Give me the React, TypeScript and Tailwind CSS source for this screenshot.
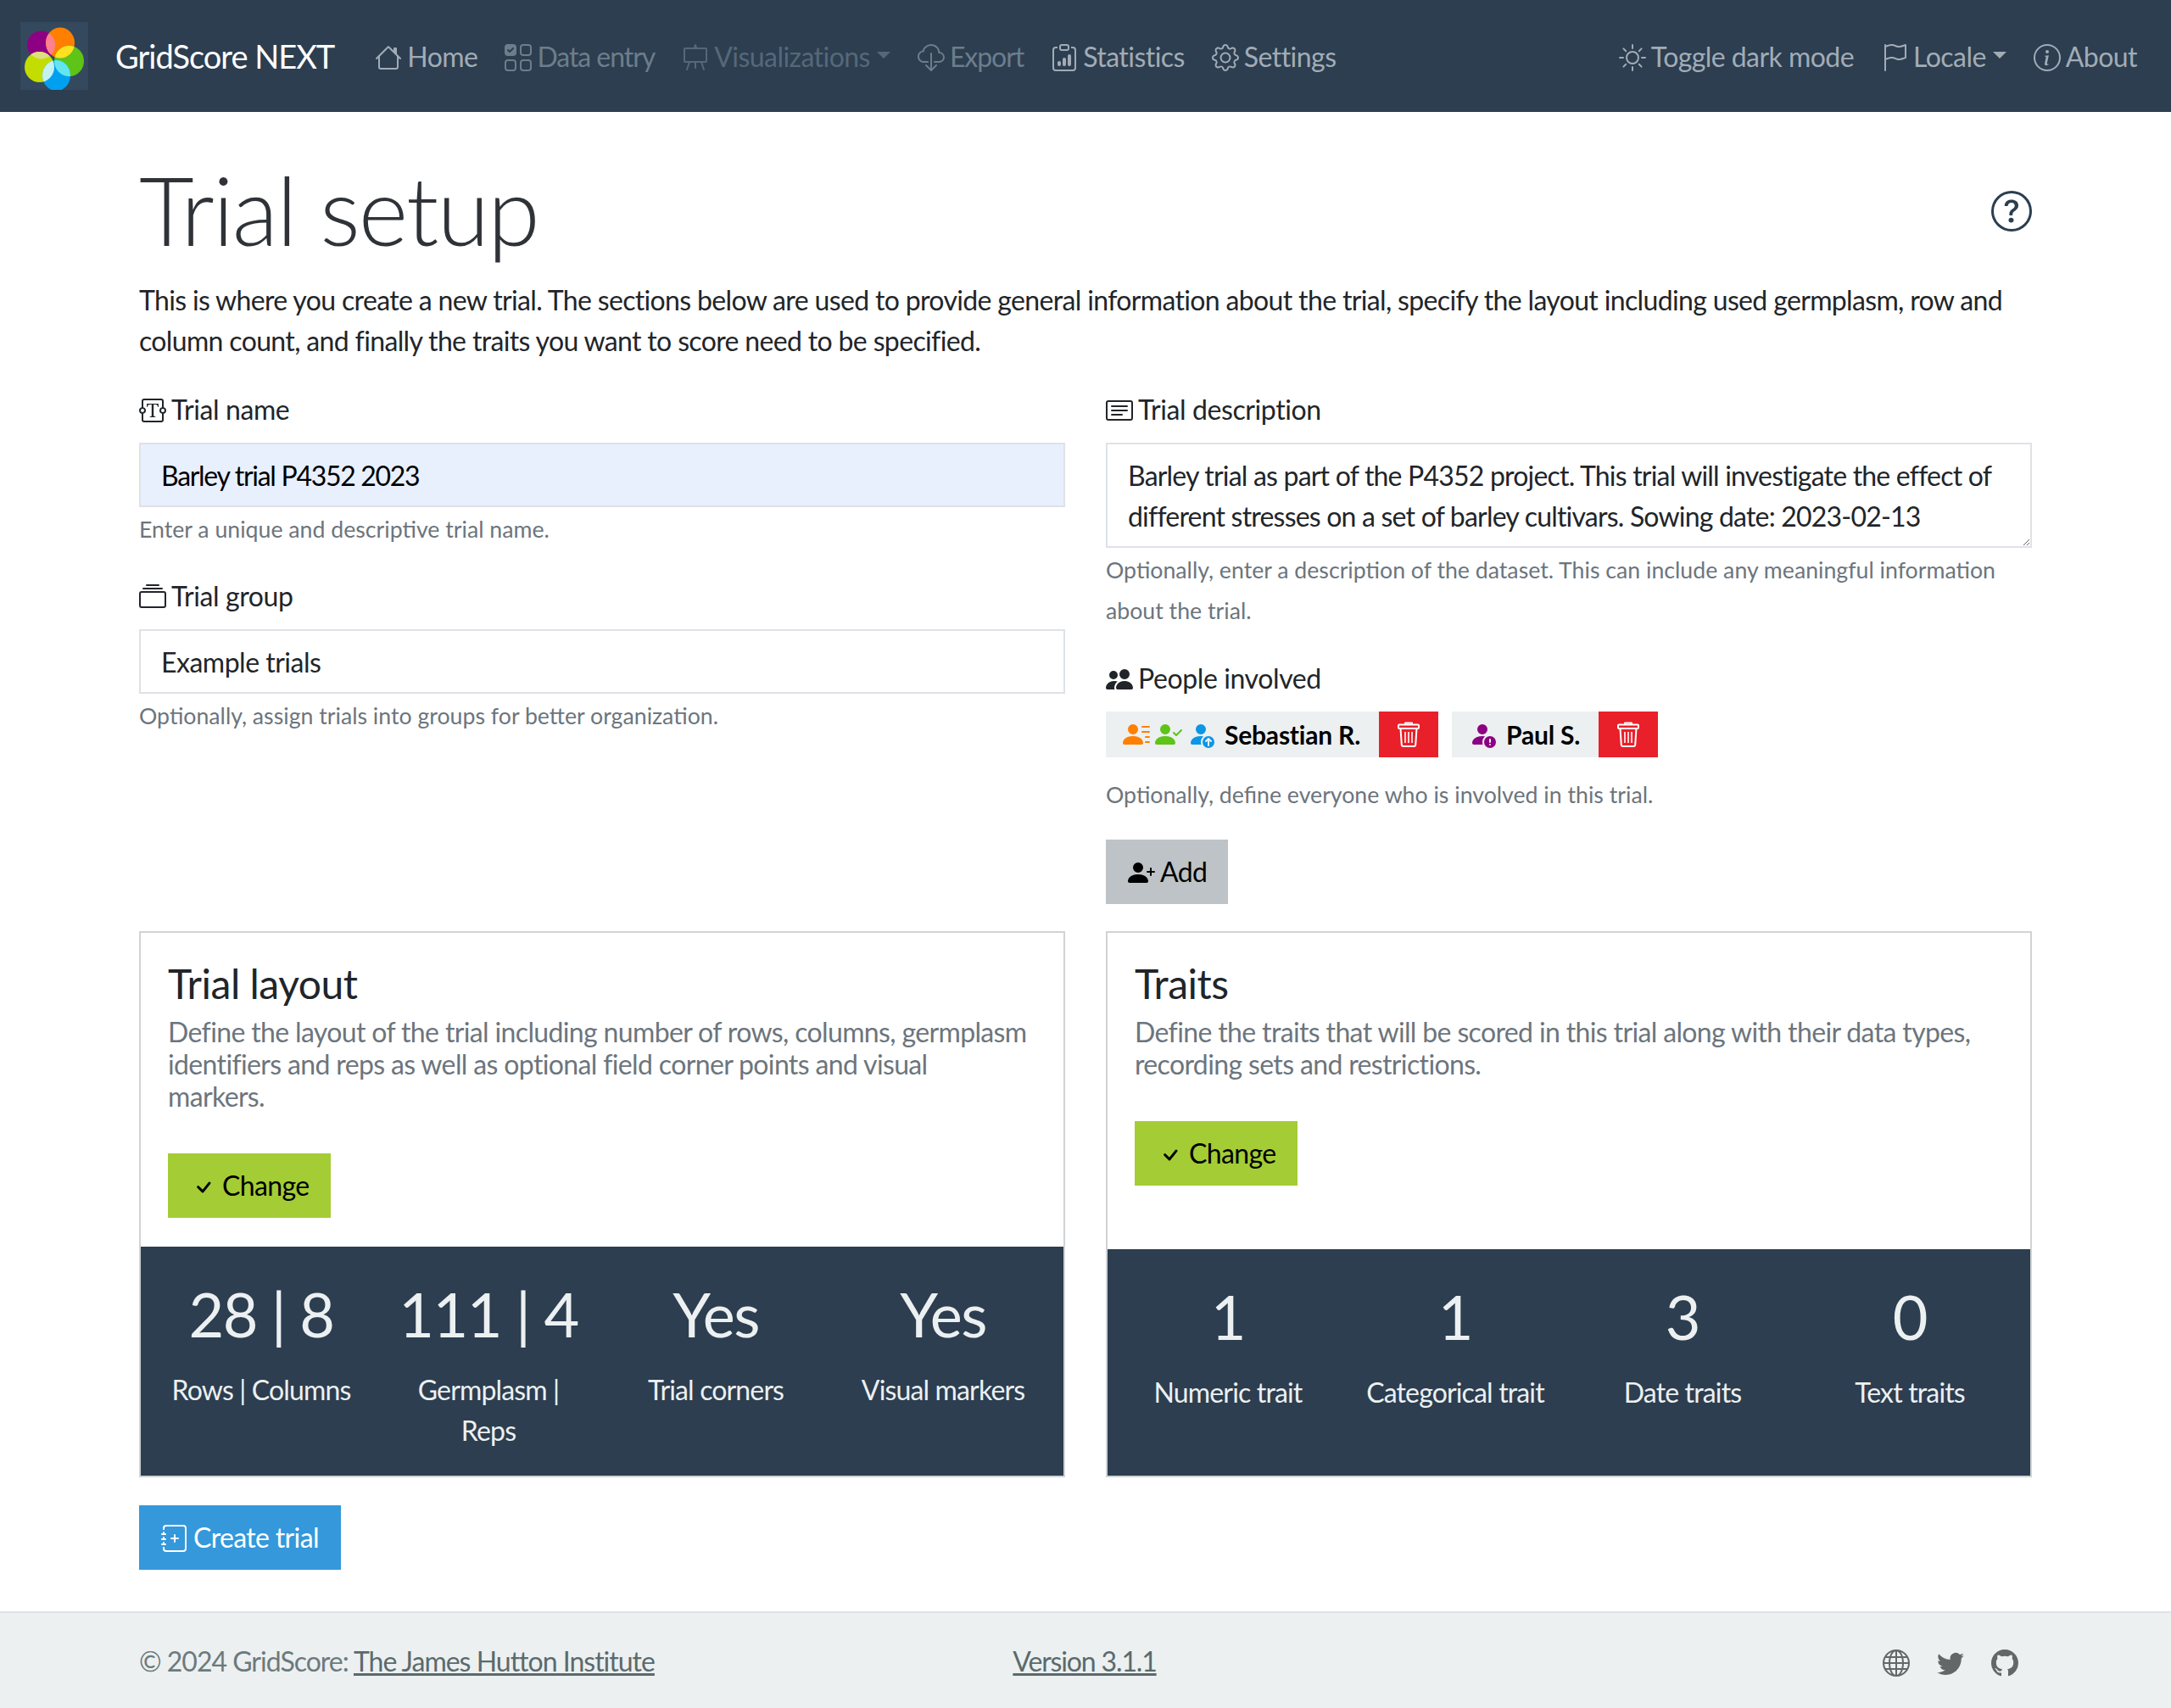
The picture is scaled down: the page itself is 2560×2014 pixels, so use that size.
import {
  BsCardText,
  BsCheck,
  BsClipboardData,
  BsCloudDownload,
  BsCollection,
  BsEasel,
  BsFlag,
  BsGear,
  BsGithub,
  BsGlobe,
  BsHouse,
  BsInfoCircle,
  BsJournalPlus,
  BsPeopleFill,
  BsPersonCheckFill,
  BsPersonFillExclamation,
  BsPersonFillUp,
  BsPersonLinesFill,
  BsPersonPlusFill,
  BsQuestionCircle,
  BsSun,
  BsTextareaT,
  BsTwitter,
  BsUiChecksGrid,
} from "react-icons/bs";
import type { IconType } from "react-icons";

// petals of the logo, overlaps are painted with clip paths
const petals = {
  purple: { cx: 24.5, cy: 27, rx: 16.5, ry: 16.5 },
  orange: { cx: 47, cy: 24.5, rx: 17, ry: 18 },
  green: { cx: 57.5, cy: 46, rx: 17.5, ry: 18 },
  lime: { cx: 22.5, cy: 53, rx: 17.5, ry: 18 },
  blue: { cx: 42.5, cy: 63, rx: 16.5, ry: 18 },
};

function Logo() {
  return (
    <div className="w-[80px] h-[80px] bg-[#34495e] shrink-0">
      <svg width="80" height="80" viewBox="0 0 80 80">
        <defs>
          <clipPath id="clip-orange"><ellipse {...petals.orange} /></clipPath>
          <clipPath id="clip-lime"><ellipse {...petals.lime} /></clipPath>
          <clipPath id="clip-green"><ellipse {...petals.green} /></clipPath>
        </defs>
        <ellipse {...petals.purple} fill="#8e0083" />
        <ellipse {...petals.orange} fill="#ff8000" />
        <ellipse {...petals.green} fill="#5ec417" />
        <ellipse {...petals.lime} fill="#c4dd00" />
        <ellipse {...petals.blue} fill="#00a0f0" />
        <ellipse {...petals.purple} fill="#ff8090" clipPath="url(#clip-orange)" />
        <ellipse {...petals.green} fill="#ffe020" clipPath="url(#clip-orange)" />
        <ellipse {...petals.purple} fill="#e0dc80" clipPath="url(#clip-lime)" />
        <ellipse {...petals.blue} fill="#60e6f0" clipPath="url(#clip-green)" />
        <ellipse {...petals.blue} fill="#c4f2f2" clipPath="url(#clip-lime)" />
      </svg>
    </div>
  );
}

function TrashIcon() {
  return (
    <svg width="30" height="32" viewBox="0 0 30 32" fill="none" stroke="white" strokeWidth="2" strokeLinejoin="round">
      <path d="M11 4V2.5h8V4" />
      <rect x="3" y="4.5" width="24" height="4.5" rx="1" />
      <path d="M5.5 9l1.3 19.5a2 2 0 0 0 2 1.5h12.4a2 2 0 0 0 2-1.5L24.500 9" />
      <path d="M11 13v13M15 13v13M19 13v13" strokeWidth="1.6" />
    </svg>
  );
}

function NavItem({ icon: Icon, label, dim, caret, tight }: { icon: IconType; label: string; dim?: "a" | "b"; caret?: boolean; tight?: boolean }) {
  const colour = dim === "b" ? "text-[#566878]" : dim === "a" ? "text-[#6d7d8b]" : "text-[#a2acb6]";
  return (
    <div className={`flex items-center ${colour}`}>
      <Icon className="w-[32px] h-[32px] mr-[6px] mt-[2px]" />
      <span className={tight ? "tracking-[-1.05px]" : "tracking-[-0.55px]"}>{label}</span>
      {caret && <span className="ml-[8px] mb-[4px] border-x-[8px] border-t-[8px] border-x-transparent border-t-current" />}
    </div>
  );
}

function FieldLabel({ icon: Icon, children }: { icon: IconType; children: string }) {
  return (
    <label className="flex items-center h-[48px] pt-[2px] mb-[16px] tracking-[-0.4px] text-[#212529]">
      <Icon className="w-[32px] h-[32px] mr-[6px] mt-[2px]" />
      {children}
    </label>
  );
}

function Hint({ children }: { children: string }) {
  return <p className="pt-[2px] -mb-[2px] text-[26.7px] leading-[48px] tracking-normal text-[#6c757d]">{children}</p>;
}

function Person({ icons, name }: { icons: { icon: IconType; colour: string }[]; name: string }) {
  return (
    <div className="flex h-[54px]">
      <div className="flex items-center bg-[#ecf0f1] pl-[20px] pr-[22px]">
        {icons.map(({ icon: Icon, colour }, i) => (
          <Icon key={i} className={`w-[32px] h-[32px] mr-[6px] ${colour}`} />
        ))}
        <span className="ml-[6px] font-bold text-black text-[30px] tracking-[-0.2px]">{name}</span>
      </div>
      <div className="w-[70px] bg-[#e9202a] flex items-center justify-center">
        <TrashIcon />
      </div>
    </div>
  );
}

function Stat({ value, label }: { value: string; label: string }) {
  return (
    <div className="flex-1 px-[16px] text-center">
      <div className="text-[72px] leading-[86px] tracking-[-1.5px] whitespace-nowrap text-[#ecf0f1]">{value}</div>
      <div className="mt-[23px] text-[#ecf0f1] leading-[48px] tracking-[-0.85px]">{label}</div>
    </div>
  );
}

function Card({ title, text, stats, statsClass }: { title: string; text: string; stats: { value: string; label: string }[]; statsClass: string }) {
  return (
    <div className="flex flex-col border-2 border-[#d1d3d4]">
      <div className="flex-1 px-[32px] pt-[36px] pb-[34px]">
        <h5 className="text-[48px] leading-[48px] tracking-[-0.5px] text-[#212529]">{title}</h5>
        <p className="mt-[14px] text-[#6c757d] leading-[38px] tracking-[-0.64px] whitespace-pre-line">{text}</p>
        <button className="mt-[48px] flex items-center h-[76px] w-[192px] pl-[26px] bg-[#a4cc35] text-black">
          <BsCheck className="w-[32px] h-[32px] mr-[6px] mt-[4px]" />
          Change
        </button>
      </div>
      <div className={`flex bg-[#2c3e50] px-[8px] pt-[36px] ${statsClass}`}>
        {stats.map((s) => (
          <Stat key={s.label} {...s} />
        ))}
      </div>
    </div>
  );
}

export default function App() {
  return (
    <div className="min-h-[2014px] flex flex-col bg-white text-[32px] leading-[48px] tracking-[-0.65px] text-[#212529] font-['Lato',sans-serif]">
      <nav className="h-[132px] bg-[#2c3e50] flex items-center pl-[24px] pr-[40px]">
        <Logo />
        <span className="ml-[32px] mr-[48px] text-[38px] tracking-[-1px] text-white">GridScore NEXT</span>
        <div className="flex items-center gap-[32px] mt-[2px]">
          <NavItem icon={BsHouse} label="Home" />
          <NavItem icon={BsUiChecksGrid} label="Data entry" dim="a" tight />
          <NavItem icon={BsEasel} label="Visualizations" dim="b" caret />
          <NavItem icon={BsCloudDownload} label="Export" dim="a" tight />
          <NavItem icon={BsClipboardData} label="Statistics" />
          <NavItem icon={BsGear} label="Settings" />
        </div>
        <div className="ml-auto flex items-center gap-[32px] mt-[2px]">
          <NavItem icon={BsSun} label="Toggle dark mode" />
          <NavItem icon={BsFlag} label="Locale" caret />
          <NavItem icon={BsInfoCircle} label="About" />
        </div>
      </nav>

      <main className="flex-1 px-[164px] pt-[48px]">
        <div className="flex items-center justify-between">
          <h1 className="text-[112px] leading-[134px] tracking-[-2px] font-light text-[#2f3338]">Trial setup</h1>
          <BsQuestionCircle className="w-[48px] h-[48px] text-[#2c3e50] mt-[4px]" />
        </div>
        <p className="mt-[16px] mb-[32px]">
          This is where you create a new trial. The sections below are used to provide general information about the trial, specify the layout including used germplasm, row and column count, and finally the traits you want to score need to be specified.
        </p>

        <div className="grid grid-cols-2 gap-x-[48px]">
          <div>
            <FieldLabel icon={BsTextareaT}>Trial name</FieldLabel>
            <input
              readOnly
              defaultValue="Barley trial P4352 2023"
              className="block w-full h-[76px] px-[24px] bg-[#e8f0fe] border-2 border-[#dee2e6] tracking-[-1.3px] text-black outline-none"
            />
            <Hint>Enter a unique and descriptive trial name.</Hint>
            <div className="mt-[32px]">
              <FieldLabel icon={BsCollection}>Trial group</FieldLabel>
              <input
                readOnly
                defaultValue="Example trials"
                className="block w-full h-[76px] px-[24px] border-2 border-[#dee2e6] tracking-[-0.5px] text-[#212529] outline-none"
              />
              <Hint>Optionally, assign trials into groups for better organization.</Hint>
            </div>
          </div>
          <div>
            <FieldLabel icon={BsCardText}>Trial description</FieldLabel>
            <textarea
              readOnly
              defaultValue="Barley trial as part of the P4352 project. This trial will investigate the effect of different stresses on a set of barley cultivars. Sowing date: 2023-02-13"
              className="block w-full h-[124px] px-[24px] py-[13px] border-2 border-[#dee2e6] tracking-[-0.8px] text-[#212529] outline-none"
            />
            <Hint>Optionally, enter a description of the dataset. This can include any meaningful information about the trial.</Hint>
            <div className="mt-[33px]">
              <FieldLabel icon={BsPeopleFill}>People involved</FieldLabel>
              <div className="flex gap-[16px] mt-[6px]">
                <Person
                  name="Sebastian R."
                  icons={[
                    { icon: BsPersonLinesFill, colour: "text-[#ff7f00]" },
                    { icon: BsPersonCheckFill, colour: "text-[#5ec417]" },
                    { icon: BsPersonFillUp, colour: "text-[#0b96e6]" },
                  ]}
                />
                <Person name="Paul S." icons={[{ icon: BsPersonFillExclamation, colour: "text-[#8e0083]" }]} />
              </div>
              <div className="mt-[18px]">
                <Hint>Optionally, define everyone who is involved in this trial.</Hint>
              </div>
              <button className="mt-[31px] flex items-center h-[76px] w-[144px] pl-[26px] bg-[#bdc3c7] text-black">
                <BsPersonPlusFill className="w-[32px] h-[32px] mr-[6px] mt-[2px] shrink-0" />
                Add
              </button>
            </div>
          </div>
        </div>

        <div className="grid grid-cols-2 gap-x-[48px] mt-[32px]">
          <Card
            title="Trial layout"
            text={"Define the layout of the trial including number of rows, columns, germplasm identifiers and reps as well as optional field corner points and visual\nmarkers."}
            statsClass="h-[270px]"
            stats={[
              { value: "28 | 8", label: "Rows | Columns" },
              { value: "111 | 4", label: "Germplasm | Reps" },
              { value: "Yes", label: "Trial corners" },
              { value: "Yes", label: "Visual markers" },
            ]}
          />
          <Card
            title="Traits"
            text="Define the traits that will be scored in this trial along with their data types, recording sets and restrictions."
            statsClass="h-[267px]"
            stats={[
              { value: "1", label: "Numeric trait" },
              { value: "1", label: "Categorical trait" },
              { value: "3", label: "Date traits" },
              { value: "0", label: "Text traits" },
            ]}
          />
        </div>

        <button className="mt-[33px] flex items-center h-[76px] w-[238px] pl-[26px] bg-[#3498db] text-white">
          <BsJournalPlus className="w-[32px] h-[32px] mr-[6px] mt-[2px] shrink-0" />
          Create trial
        </button>
      </main>

      <footer className="h-[114px] bg-[#ecf0f1] border-t-2 border-[#dee2e6] px-[164px] pt-[2px] flex items-center text-[#6c7a7d]">
        <div className="flex-1 tracking-[-1px]">
          © 2024 GridScore: <span className="underline text-[#5b6a6c]">The James Hutton Institute</span>
        </div>
        <div className="flex-1 pl-[14px] text-center underline tracking-[-1.15px] text-[#5b6a6c]">Version 3.1.1</div>
        <div className="flex-1 flex justify-end gap-[32px] pr-[16px] mt-[4px] text-[#626769]">
          <BsGlobe className="w-[32px] h-[32px]" />
          <BsTwitter className="w-[32px] h-[32px]" />
          <BsGithub className="w-[32px] h-[32px]" />
        </div>
      </footer>
    </div>
  );
}
